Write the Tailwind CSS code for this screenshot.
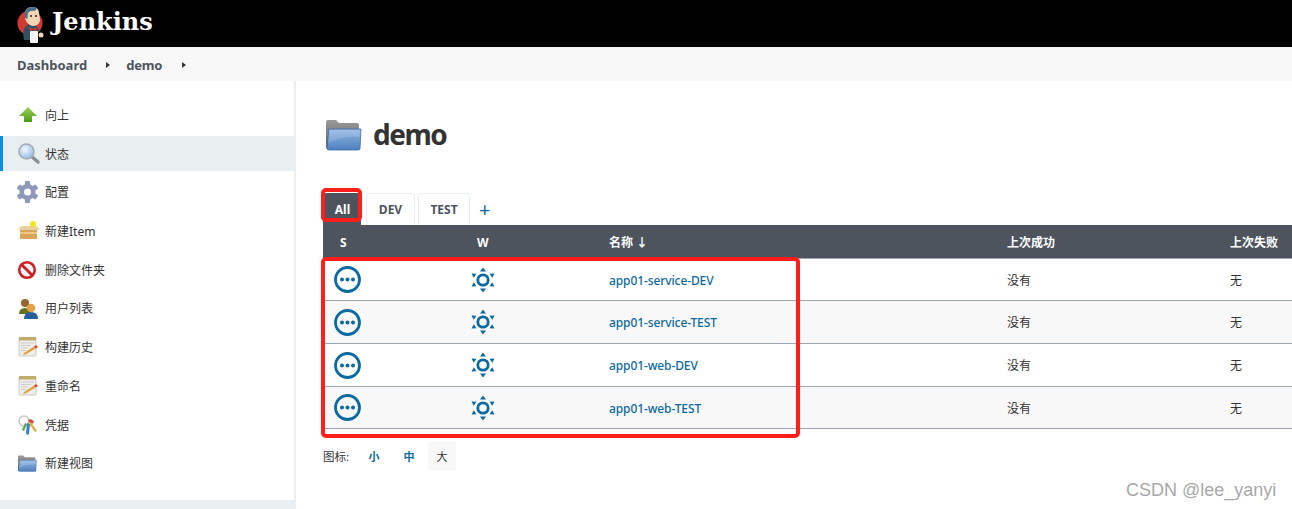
<!DOCTYPE html>
<html lang="zh-CN">
<head>
    <meta charset="UTF-8">
    <title>demo [Jenkins]</title>
    <script src="https://cdn.jsdelivr.net/npm/@tailwindcss/browser@4"></script>
</head>
<body class="h-[509px] overflow-hidden bg-white text-[12px] text-[#333] font-['Noto_Sans','Noto_Sans_CJK_SC',sans-serif]">
    <!-- Shared icons -->
    <svg class="absolute w-0 h-0">
        <defs>
            <linearGradient id="folderFront" x1="0" y1="0" x2="0" y2="1">
                <stop offset="0" stop-color="#8fb6e2"/>
                <stop offset="1" stop-color="#4f80bd"/>
            </linearGradient>
            <linearGradient id="folderBack" x1="0" y1="0" x2="0" y2="1">
                <stop offset="0" stop-color="#9a9a9a"/>
                <stop offset="1" stop-color="#5e5e5e"/>
            </linearGradient>
            <radialGradient id="lens" cx="0.4" cy="0.35" r="0.7">
                <stop offset="0" stop-color="#f2f8ff"/>
                <stop offset="1" stop-color="#8fb8e6"/>
            </radialGradient>
            <linearGradient id="arrowGreen" x1="0" y1="0" x2="0" y2="1">
                <stop offset="0" stop-color="#9ccf5a"/>
                <stop offset="1" stop-color="#4d9a12"/>
            </linearGradient>
        </defs>
        <symbol id="folder" viewBox="0 0 36 32">
            <path d="M0 3q0-2 2-2h8l3 3h18q2 0 2 2v24H2q-2 0-2-2z" fill="url(#folderBack)"/>
            <path d="M3 10h32l-1 20q0 1-2 1H3q-2 0-2-2z" fill="url(#folderFront)" stroke="#3f6fae" stroke-width=".8"/>
            <path d="M3 11h31l-.4 7Q18 16 2.500 24z" fill="#fff" opacity=".16"/>
        </symbol>
        <symbol id="notepad" viewBox="0 0 24 24">
            <rect x="2" y="3" width="17" height="18" rx="1" fill="#eeeeea" stroke="#bdbdb6" stroke-width=".8"/>
            <rect x="2" y="2" width="17" height="3.500" fill="#bfae6a"/>
            <path d="M4 8h13M4 10.500h10M4 13h7M4 15.500h5" stroke="#cdcdc9" stroke-width="1"/>
            <path d="M7 18l10-6.500 2 1.800-10 6-3 .7z" fill="#e3a13c"/>
            <path d="M17 11.500l2-1.300 2 1.900-2 1.200z" fill="#d8352d"/>
        </symbol>
        <symbol id="status" viewBox="0 0 27 27">
            <circle cx="13.500" cy="13.500" r="12" fill="none" stroke="#0b6aa2" stroke-width="2.800"/>
            <circle cx="8" cy="13.500" r="2" fill="#0b6aa2"/>
            <circle cx="13.500" cy="13.500" r="2" fill="#0b6aa2"/>
            <circle cx="19" cy="13.500" r="2" fill="#0b6aa2"/>
        </symbol>
        <symbol id="weather" viewBox="0 0 24 26">
            <circle cx="12" cy="13" r="5.200" fill="none" stroke="#0b6aa2" stroke-width="2.800"/>
            <g fill="#0b6aa2">
                <path d="M12 .5l3 4H9z"/>
                <path d="M12 25.500l-3-4h6z"/>
                <path d="M.5 6.500l5 .2-2.800 4z"/>
                <path d="M23.500 6.500l-5 .2 2.800 4z"/>
                <path d="M.5 19.500l2.300-4.300 2.700 4z"/>
                <path d="M23.500 19.500l-2.300-4.300-2.700 4z"/>
            </g>
        </symbol>
    </svg>

    <!-- Header -->
    <div class="h-[47px] bg-black flex items-center pl-[17px] gap-[7px]">
        <svg class="w-[28px] h-[40px]" viewBox="0 0 28 40">
            <circle cx="13" cy="19" r="12.500" fill="#d33833"/>
            <path d="M7 36q-2-9 1-13l4-3 7 1 3 5-3 10z" fill="#335061"/>
            <path d="M8 10q0-7 7-7t7 6l1 6q0 4-3 6-4 2-7 0-4-2-5-7z" fill="#f0d6b7"/>
            <path d="M8 14q-1-8 3-10 5-2 9 0l-2 3q-5-1-7 2l-.5 6z" fill="#49728b"/>
            <path d="M12 23l4 2 4-2-1 4-3-1-3 1z" fill="#d33833"/>
            <rect x="13" y="27" width="8" height="12" rx="1" fill="#f4f4f4"/>
            <circle cx="24" cy="31" r="2.500" fill="#f0d6b7"/>
            <circle cx="14" cy="12" r="1" fill="#222"/>
            <circle cx="19" cy="12" r="1" fill="#222"/>
        </svg>
        <span class="font-['DejaVu_Serif',serif] font-bold text-[24px] text-white leading-none pb-[3px]">Jenkins</span>
    </div>

    <!-- Breadcrumb -->
    <div class="h-[34px] bg-[#f8f8f8] flex items-center pl-[17px] pt-[2px] font-bold text-[13px] text-[#4d545d]">
        <span class="pt-[2px]">Dashboard</span>
        <span class="ml-[19px] w-0 h-0 border-y-[3px] border-y-transparent border-l-[4px] border-l-[#333]"></span>
        <span class="ml-[16px] pt-[2px] tracking-[-0.2px]">demo</span>
        <span class="ml-[20px] w-0 h-0 border-y-[3px] border-y-transparent border-l-[4px] border-l-[#333]"></span>
    </div>

    <div class="flex h-[428px]">
        <!-- Sidebar -->
        <div class="w-[296px] shrink-0 border-r-2 border-[#e9eef1] flex flex-col">
            <div class="flex flex-col gap-[3.7px] pt-[16.500px]">
                <a class="h-[35px] flex items-center gap-[4px] pl-[17px]">
                    <svg class="w-[24px] h-[24px]" viewBox="0 0 24 24"><path d="M11 4l9 9h-5v6H7v-6H2z" fill="url(#arrowGreen)"/></svg>
                    <span class="pt-[2px]">向上</span>
                </a>
                <a class="h-[35px] flex items-center gap-[4px] pl-[14px] border-l-[3px] border-[#0b8de0] bg-[#e9eef1]">
                    <svg class="w-[24px] h-[24px]" viewBox="0 0 24 24"><path d="M14 14l7 6" stroke="#8a8f96" stroke-width="3.500" stroke-linecap="round"/><circle cx="9.500" cy="9.500" r="7.500" fill="url(#lens)" stroke="#a8adb3" stroke-width="1.600"/></svg>
                    <span class="pt-[2px]">状态</span>
                </a>
                <a class="h-[35px] flex items-center gap-[4px] pl-[17px]">
                    <svg class="w-[24px] h-[24px]" viewBox="0 0 24 24"><g fill="#8f97bb"><circle cx="10.500" cy="12" r="8"/><rect x="8" y="1" width="5" height="22" rx="1"/><rect x="8" y="1" width="5" height="22" rx="1" transform="rotate(60 10.500 12)"/><rect x="8" y="1" width="5" height="22" rx="1" transform="rotate(120 10.500 12)"/></g><circle cx="10.500" cy="12" r="3.500" fill="#fff"/></svg>
                    <span class="pt-[2px]">配置</span>
                </a>
                <a class="h-[35px] flex items-center gap-[4px] pl-[17px]">
                    <svg class="w-[24px] h-[24px]" viewBox="0 0 24 24"><path d="M1 10l4-3h14l4 3-3 1H4z" fill="#e9cf9c"/><path d="M3 11h17v8q0 1-1 1H4q-1 0-1-1z" fill="#d9a55b"/><path d="M3 13h17v2H3z" fill="#efc887"/><circle cx="16" cy="5" r="3" fill="#f5e61c"/></svg>
                    <span class="pt-[2px]">新建Item</span>
                </a>
                <a class="h-[35px] flex items-center gap-[4px] pl-[17px]">
                    <svg class="w-[24px] h-[24px]" viewBox="0 0 24 24"><circle cx="10" cy="12" r="7.800" fill="#f5f5f5" stroke="#cf1f24" stroke-width="2.600"/><path d="M4.500 6.500l11 11" stroke="#cf1f24" stroke-width="2.800"/></svg>
                    <span class="pt-[2px]">删除文件夹</span>
                </a>
                <a class="h-[35px] flex items-center gap-[4px] pl-[17px]">
                    <svg class="w-[24px] h-[24px]" viewBox="0 0 24 24"><circle cx="8" cy="7" r="4" fill="#94682d"/><path d="M2 18q0-6 6-6t6 6z" fill="#66721d"/><path d="M7 23q0-7 7-7t7 7z" fill="#2a5f9e"/><circle cx="14" cy="12" r="4.300" fill="#e5a048"/></svg>
                    <span class="pt-[2px]">用户列表</span>
                </a>
                <a class="h-[35px] flex items-center gap-[4px] pl-[17px]">
                    <svg class="w-[24px] h-[24px]"><use href="#notepad"/></svg>
                    <span class="pt-[2px]">构建历史</span>
                </a>
                <a class="h-[35px] flex items-center gap-[4px] pl-[17px]">
                    <svg class="w-[24px] h-[24px]"><use href="#notepad"/></svg>
                    <span class="pt-[2px]">重命名</span>
                </a>
                <a class="h-[35px] flex items-center gap-[4px] pl-[17px]">
                    <svg class="w-[24px] h-[24px]" viewBox="0 0 24 24"><circle cx="7" cy="8" r="5" fill="none" stroke="#c6c6c6" stroke-width="1.600"/><path d="M11 7q4-2 6 2l-3 3z" fill="#d8453a"/><path d="M14 9l6 9-2 1-6-8z" fill="#d9b53a"/><path d="M10 10l3 1-1 10-2 1-1-2z" fill="#3f7fc2"/><path d="M8 10l2 1-3 7-2-1z" fill="#55a84a"/></svg>
                    <span class="pt-[2px]">凭据</span>
                </a>
                <a class="h-[35px] flex items-center gap-[4px] pl-[17px]">
                    <svg class="w-[19px] h-[17px] ml-[1px] mr-[4px]"><use href="#folder"/></svg>
                    <span class="pt-[2px]">新建视图</span>
                </a>
            </div>
            <div class="mt-auto h-[9px] bg-[#e9eef1] -mr-[2px]"></div>
        </div>

        <!-- Main -->
        <div class="relative flex-1 min-w-0 pl-[27px]">
            <div class="h-[112px] flex items-start pt-[36px] pl-[3px] gap-[11px]">
                <svg class="w-[36px] h-[32px] mt-[2px]"><use href="#folder"/></svg>
                <h1 class="text-[28px] leading-[34px] font-bold tracking-[-1.5px] text-[#333]">demo</h1>
            </div>

            <!-- Tabs -->
            <div class="flex items-end h-[32px] pt-0 font-bold text-[#4d545d]">
                <div class="w-[38px] h-[32px] pt-[2px] pl-[1px] flex items-center justify-center bg-[#4d545d] text-white rounded-t-[4px]">All</div>
                <div class="ml-[5px] w-[49px] h-[32px] pt-[1px] flex items-center justify-center border border-b-0 border-[#e9eef1] rounded-t-[4px]">DEV</div>
                <div class="ml-[3px] w-[52px] h-[32px] pt-[1px] flex items-center justify-center border border-b-0 border-[#e9eef1] rounded-t-[4px]">TEST</div>
                <div class="ml-[9px] h-[32px] pt-[2px] flex items-center text-[#0b6aa2] text-[20px] font-normal">+</div>
            </div>

            <!-- Projects -->
            <div class="w-[969px]">
                <div class="h-[34px] grid grid-cols-[140px_146px_398px_223px_1fr] items-center bg-[#4d545d] text-white font-bold border-b border-[#9aa7b0]">
                    <div class="pl-[17px] pt-[2px]">S</div>
                    <div class="pl-[14px] pt-[2px]">W</div>
                    <div class="pt-[2px]">名称 ↓</div>
                    <div class="pt-[2px]">上次成功</div>
                    <div class="pt-[2px]">上次失败</div>
                </div>
                <div class="h-[42px] grid grid-cols-[140px_146px_398px_223px_1fr] items-center border-b border-[#9aa7b0]">
                    <div class="pl-[11px] flex"><svg class="w-[27px] h-[27px]"><use href="#status"/></svg></div>
                    <div class="pl-[8px] flex"><svg class="w-[24px] h-[26px]"><use href="#weather"/></svg></div>
                    <a class="pt-[2px] text-[#0b6aa2] font-medium tracking-[-0.1px]">app01-service-DEV</a>
                    <div class="pt-[2px]">没有</div>
                    <div class="pt-[2px]">无</div>
                </div>
                <div class="h-[43px] grid grid-cols-[140px_146px_398px_223px_1fr] items-center border-b border-[#9aa7b0] bg-[#f8f8f8]">
                    <div class="pl-[11px] flex"><svg class="w-[27px] h-[27px]"><use href="#status"/></svg></div>
                    <div class="pl-[8px] flex"><svg class="w-[24px] h-[26px]"><use href="#weather"/></svg></div>
                    <a class="pt-[2px] text-[#0b6aa2] font-medium tracking-[-0.1px]">app01-service-TEST</a>
                    <div class="pt-[2px]">没有</div>
                    <div class="pt-[2px]">无</div>
                </div>
                <div class="h-[43px] grid grid-cols-[140px_146px_398px_223px_1fr] items-center border-b border-[#9aa7b0]">
                    <div class="pl-[11px] flex"><svg class="w-[27px] h-[27px]"><use href="#status"/></svg></div>
                    <div class="pl-[8px] flex"><svg class="w-[24px] h-[26px]"><use href="#weather"/></svg></div>
                    <a class="pt-[2px] text-[#0b6aa2] font-medium tracking-[-0.1px]">app01-web-DEV</a>
                    <div class="pt-[2px]">没有</div>
                    <div class="pt-[2px]">无</div>
                </div>
                <div class="h-[42px] grid grid-cols-[140px_146px_398px_223px_1fr] items-center border-b border-[#9aa7b0] bg-[#f8f8f8]">
                    <div class="pl-[11px] flex"><svg class="w-[27px] h-[27px]"><use href="#status"/></svg></div>
                    <div class="pl-[8px] flex"><svg class="w-[24px] h-[26px]"><use href="#weather"/></svg></div>
                    <a class="pt-[2px] text-[#0b6aa2] font-medium tracking-[-0.1px]">app01-web-TEST</a>
                    <div class="pt-[2px]">没有</div>
                    <div class="pt-[2px]">无</div>
                </div>
            </div>

            <!-- Icon size -->
            <div class="flex items-center h-[28px] mt-[13px]">
                <span class="w-[45px] pt-[2px] text-[11.500px]">图标:</span>
                <a class="w-[12px] pt-[2px] text-center text-[11px] font-bold text-[#0b6aa2]">小</a>
                <a class="w-[12px] ml-[23px] pt-[2px] text-center text-[11px] font-bold text-[#0b6aa2]">中</a>
                <a class="ml-[13px] w-[28px] h-[28px] pt-[2px] flex items-center justify-center text-[11px] rounded-[3px] bg-[#f8f8f8]">大</a>
            </div>

            <!-- Red annotations drawn over the screenshot -->
            <div class="absolute left-[25px] top-[107px] w-[41px] h-[34px] border-4 border-[#fe1f1a] rounded-[5px]"></div>
            <div class="absolute left-[25px] top-[176px] w-[479px] h-[181px] border-4 border-[#fe1f1a] rounded-[5px]"></div>
        </div>
    </div>

    <!-- Watermark -->
    <div class="absolute left-[1126px] top-[478px] text-[18px] leading-[24px] font-['Liberation_Sans',sans-serif] text-[#8f8f8f]/80">CSDN @lee_yanyi</div>
</body>
</html>
